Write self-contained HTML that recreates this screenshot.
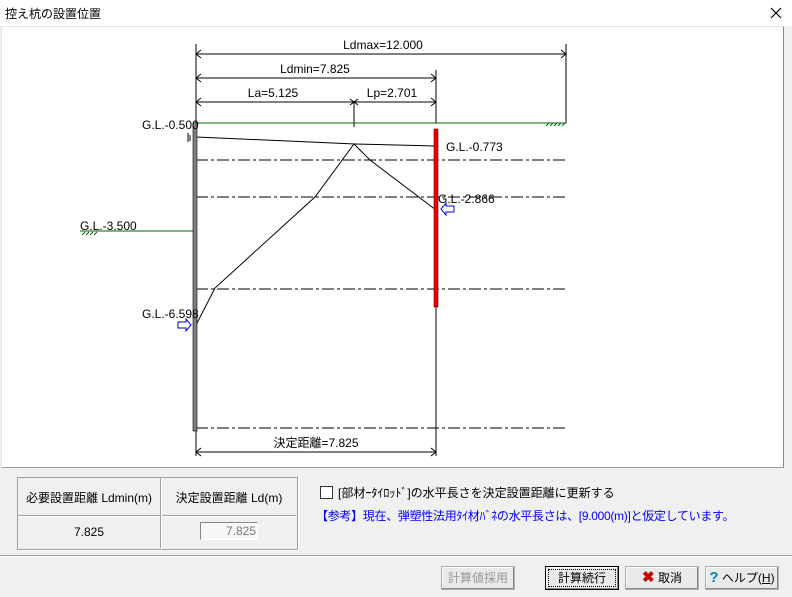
<!DOCTYPE html>
<html><head><meta charset="utf-8"><style>
body{margin:0;width:792px;height:597px;background:#f0f0f0;position:relative;overflow:hidden;font-family:"Liberation Sans","Noto Sans CJK JP",sans-serif;font-size:12px;color:#000}
.a{position:absolute}
.btn{position:absolute;height:22px;top:566px;background:#e9e9e9;border:1px solid #adadad;box-shadow:inset -1px -1px #888,inset 1px 1px #fff;text-align:center;line-height:22px;font-size:12px}
</style></head><body>
<div class="a" style="left:0;top:0;width:792px;height:26px;background:#fff"></div>
<div class="a" style="left:5px;top:5px;font-size:12px">控え杭の設置位置</div>
<svg class="a" style="left:770px;top:7px" width="12" height="12"><path d="M1 1L11 11M11 1L1 11" stroke="#000" stroke-width="1.2"/></svg>
<div class="a" style="left:1px;top:26px;width:781px;height:440px;background:#fff;border:1px solid #e3e3e3;border-right:1px solid #888;border-bottom:1px solid #a0a0a0"></div>
<svg class="a" style="left:0;top:0" width="792" height="470" font-family="Liberation Sans" font-size="12">
<g stroke="#000" stroke-width="1" fill="none">
<line x1="196" y1="44" x2="196" y2="123"/><line x1="566" y1="44" x2="566" y2="123"/><line x1="436" y1="70" x2="436" y2="123"/>
<line x1="196" y1="54" x2="566" y2="54"/><line x1="196" y1="78" x2="436" y2="78"/><line x1="196" y1="102" x2="436" y2="102"/>
<line x1="354" y1="102" x2="354" y2="127"/>
<path d="M201 50 L196 54 L201 58 M561 50 L566 54 L561 58 M201 74 L196 78 L201 82 M431 74 L436 78 L431 82 M201 98 L196 102 L201 106 M431 98 L436 102 L431 106 M350 99 L354 102 L350 105 M358 99 L354 102 L358 105"/>
<line x1="196" y1="452" x2="436" y2="452"/><line x1="196" y1="430" x2="196" y2="456"/><line x1="436" y1="307" x2="436" y2="456"/>
<path d="M201 448 L196 452 L201 456 M431 448 L436 452 L431 456"/>
<path d="M196 137 L355 144 L436 146"/>
<path d="M188 133 v9 M190 135 v6" />
<polyline points="196,325 215,288 315,197 354,144 370,160 436,210"/>
<line x1="80" y1="231" x2="193" y2="231" stroke="#060"/>
<line x1="196" y1="123" x2="566" y2="123" stroke="#060"/>
<path d="M82 235 l3 -3 M86 235 l3 -3 M90 235 l3 -3 M94 235 l3 -3 M546 126 l3 -3 M550 126 l3 -3 M554 126 l3 -3 M558 126 l3 -3 M562 126 l3 -3" stroke="#060"/>
<g stroke-dasharray="12,3,3,3"><line x1="196" y1="160" x2="567" y2="160"/><line x1="196" y1="197" x2="567" y2="197"/><line x1="196" y1="289" x2="567" y2="289"/><line x1="196" y1="428" x2="567" y2="428"/></g>
</g>
<rect x="193" y="123" width="4" height="308" fill="#808080" stroke="#000" stroke-width="0.6"/>
<rect x="434" y="129" width="4" height="178" fill="#e00" stroke="#600" stroke-width="0.6"/>
<path d="M178 322 h8 v-3 l5 6 -5 6 v-3 h-8z M454 206 h-8 v-3 l-5 6 5 6 v-3 h8z" fill="#fff" stroke="#00f"/>
<g fill="#000">
<text x="383" y="49" text-anchor="middle">Ldmax=12.000</text>
<text x="315" y="73" text-anchor="middle">Ldmin=7.825</text>
<text x="273" y="97" text-anchor="middle">La=5.125</text>
<text x="392" y="97" text-anchor="middle">Lp=2.701</text>
<text x="142" y="129">G.L.-0.500</text>
<text x="446" y="151">G.L.-0.773</text>
<text x="438" y="203">G.L.-2.866</text>
<text x="80" y="230">G.L.-3.500</text>
<text x="142" y="318">G.L.-6.598</text>
<text x="316" y="447" text-anchor="middle" font-family="Liberation Sans,Noto Sans CJK JP">決定距離=7.825</text>
</g></svg>
<div class="a" style="left:0;top:555px;width:792px;border-top:1px solid #a0a0a0;border-bottom:1px solid #fff"></div>
<div class="a" style="left:17px;top:477px;width:279px;height:71px;border:1px solid #a0a0a0;box-shadow:1px 1px #fff"></div>
<div class="a" style="left:18px;top:515px;width:278px;border-top:1px solid #a0a0a0;border-bottom:1px solid #fff"></div>
<div class="a" style="left:160px;top:478px;height:70px;border-left:1px solid #a0a0a0;border-right:1px solid #fff"></div>
<div class="a" style="left:18px;top:489px;width:142px;text-align:center">必要設置距離 Ldmin(m)</div>
<div class="a" style="left:162px;top:489px;width:134px;text-align:center">決定設置距離 Ld(m)</div>
<div class="a" style="left:18px;top:525px;width:142px;text-align:center">7.825</div>
<div class="a" style="left:200px;top:522px;width:55px;height:16px;background:#f8f8f8;border:1px solid #888;border-right-color:#fff;border-bottom-color:#fff;color:#777;text-align:right;line-height:16px;padding-right:1px">7.825</div>
<div class="a" style="left:320px;top:486px;width:11px;height:11px;background:#fff;border:1px solid #333"></div>
<div class="a" style="left:338px;top:484px">[部材ｰﾀｲﾛｯﾄﾞ]の水平長さを決定設置距離に更新する</div>
<div class="a" style="left:316px;top:507px;color:#00f;letter-spacing:-0.3px">【参考】現在、弾塑性法用ﾀｲ材ﾊﾞﾈの水平長さは、[9.000(m)]と仮定しています。</div>
<div class="btn" style="left:441px;width:72px;color:#999">計算値採用</div>
<div class="btn" style="left:545px;width:72px;outline:1px dotted #000;outline-offset:-4px;border-color:#000">計算続行</div>
<div class="btn" style="left:625px;width:72px"><span style="color:#c00;font-weight:bold;font-size:15px">✖</span> 取消</div>
<div class="btn" style="left:705px;width:72px"><span style="color:#08a;font-weight:bold;font-size:15px">?</span> ヘルプ(<u>H</u>)</div>
</body></html>
